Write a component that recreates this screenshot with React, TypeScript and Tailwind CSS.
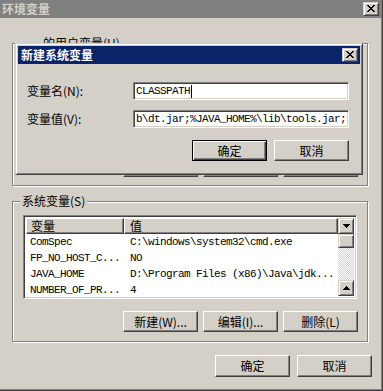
const raised =
  "border border-t-white border-l-white border-r-[#404040] border-b-[#404040] shadow-[inset_-1px_-1px_0_#808080]";
const raisedDefault =
  "border border-black shadow-[inset_1px_1px_0_#fff,inset_-1px_-1px_0_#404040,inset_-2px_-2px_0_#808080]";
const raisedSmall =
  "border border-t-[#d4d0c8] border-l-[#d4d0c8] border-r-[#404040] border-b-[#404040] shadow-[inset_1px_1px_0_#fff,inset_-1px_-1px_0_#808080]";
const sunken =
  "border border-t-[#808080] border-l-[#808080] border-r-white border-b-white shadow-[inset_1px_1px_0_#404040,inset_-1px_-1px_0_#d4d0c8]";
const etched =
  "border border-[#808080] shadow-[inset_1px_1px_0_#fff,1px_1px_0_#fff]";
const mono = "font-['Liberation_Mono',monospace] text-[11px] tracking-[-0.6px]";

const rows = [
  ["ComSpec", "C:\\windows\\system32\\cmd.exe"],
  ["FP_NO_HOST_C...", "NO"],
  ["JAVA_HOME", "D:\\Program Files (x86)\\Java\\jdk..."],
  ["NUMBER_OF_PR...", "4"],
];

function CloseBtn() {
  // the classic 8x7 bitmap cross
  const cells = [
    [0, 0, 2], [6, 0, 2],
    [1, 1, 2], [5, 1, 2],
    [2, 2, 4],
    [3, 3, 2],
    [2, 4, 4],
    [1, 5, 2], [5, 5, 2],
    [0, 6, 2], [6, 6, 2],
  ];
  return (
    <div className={`flex h-[14px] w-[16px] items-center justify-center bg-[#d4d0c8] ${raisedSmall}`}>
      <svg width="8" height="7" viewBox="0 0 8 7" shapeRendering="crispEdges" className="ml-[-1px] mt-[-1px]">
        {cells.map(([x, y, w], i) => (
          <rect key={i} x={x} y={y} width={w} height={1} fill="#000" />
        ))}
      </svg>
    </div>
  );
}

function Arrow({ down = false }: { down?: boolean }) {
  return (
    <div className={`flex h-[16px] w-[16px] items-center justify-center bg-[#d4d0c8] ${raisedSmall}`}>
      <svg width="7" height="4" viewBox="0 0 7 4" shapeRendering="crispEdges">
        {[0, 1, 2, 3].map((i) => {
          const y = down ? i : 3 - i;
          return <rect key={i} x={3 - i} y={y} width={1 + i * 2} height={1} fill="#000" />;
        })}
      </svg>
    </div>
  );
}

function Btn({ children, isDefault = false, tall = false }: { children: React.ReactNode; isDefault?: boolean; tall?: boolean }) {
  return (
    <div
      className={`flex w-[75px] items-center justify-center bg-[#d4d0c8] ${tall ? "h-[22px]" : "h-[21px]"} ${
        isDefault ? raisedDefault : raised
      }`}
    >
      {children}
    </div>
  );
}

export default function App() {
  return (
    <div className="relative h-[391px] w-[383px] overflow-hidden bg-[#d4d0c8] font-['Noto_Sans_CJK_SC',sans-serif] text-[12px] leading-[12px] text-black">
      {/* 环境变量 window (its left and top frame lie outside the shot) */}
      <div className="flex h-full flex-col border-r border-b border-r-[#404040] border-b-[#404040] pr-[1px] shadow-[inset_-1px_-1px_0_#808080]">
        <div className="flex h-[18px] items-center justify-between bg-[#808080] px-[2px]">
          <span className="font-bold text-[#d4d0c8]">环境变量</span>
          <CloseBtn />
        </div>

        <fieldset className={`ml-[12px] mt-[19px] w-[356px] ${etched}`}>
          <legend className="ml-[28px] bg-[#d4d0c8] px-[2px] leading-[12px]">的用户变量(U)</legend>
          <div className="flex h-[136px] flex-col justify-end pb-[8px]">
            <div className="flex justify-end gap-[5px] pr-[9px]">
              <Btn>新建(W)...</Btn>
              <Btn>编辑(E)...</Btn>
              <Btn>删除(D)</Btn>
            </div>
          </div>
        </fieldset>

        <fieldset className={`ml-[12px] mt-[9px] w-[356px] ${etched}`}>
          <legend className="ml-[7px] bg-[#d4d0c8] px-[2px] leading-[12px]">系统变量(S)</legend>
          <div className="pb-[9px]">
            <div className={`ml-[10px] mt-[8px] flex h-[84px] w-[334px] bg-white p-[2px] ${sunken}`}>
              <div className="flex-1">
                <div className="flex h-[16px]">
                  <div className={`flex w-[98px] items-center bg-[#d4d0c8] pl-[4px] ${raised}`}>变量</div>
                  <div className={`flex flex-1 items-center bg-[#d4d0c8] pl-[5px] ${raised}`}>值</div>
                </div>
                {rows.map(([name, value]) => (
                  <div key={name} className={`flex h-[16px] items-center ${mono}`}>
                    <div className="w-[98px] pl-[4px]">{name}</div>
                    <div className="flex-1 pl-[6px]">{value}</div>
                  </div>
                ))}
              </div>
              <div className="flex w-[16px] flex-col">
                <Arrow />
                <div className={`h-[14px] bg-[#d4d0c8] ${raisedSmall}`} />
                <div className="flex-1 bg-[repeating-conic-gradient(#d4d0c8_0_25%,#fff_0_50%)] bg-[length:2px_2px]" />
                <Arrow down />
              </div>
            </div>
            <div className="mt-[12px] flex justify-end gap-[5px] pr-[9px]">
              <Btn>新建(W)...</Btn>
              <Btn>编辑(I)...</Btn>
              <Btn>删除(L)</Btn>
            </div>
          </div>
        </fieldset>

        <div className="mt-[13px] flex justify-end gap-[7px] pr-[9px]">
          <Btn tall>确定</Btn>
          <Btn tall>取消</Btn>
        </div>
      </div>

      {/* 新建系统变量 dialog, on top of the window */}
      <div className="absolute left-[15px] top-[43px] h-[132px] w-[348px] border border-t-[#d4d0c8] border-l-[#d4d0c8] border-r-[#404040] border-b-[#404040] bg-[#d4d0c8] p-[2px] shadow-[inset_1px_1px_0_#fff,inset_-1px_-1px_0_#808080]">
        <div className="flex h-[18px] items-center justify-between bg-[#0a246a] pl-[3px] pr-[2px]">
          <span className="font-bold text-white">新建系统变量</span>
          <CloseBtn />
        </div>
        <div className="pl-[9px] pr-[11px]">
          <div className="mt-[18px] flex items-center">
            <span className="w-[106px]">变量名(N):</span>
            <div className={`flex h-[18px] w-[216px] items-center bg-white pl-[2px] ${sunken} ${mono}`}>
              CLASSPATH
              <span className="ml-[1px] h-[13px] w-px bg-black" />
            </div>
          </div>
          <div className="mt-[10px] flex items-center">
            <span className="w-[106px]">变量值(V):</span>
            <div className={`flex h-[18px] w-[216px] items-center overflow-hidden whitespace-nowrap bg-white pl-[2px] ${sunken} ${mono}`}>
              b\dt.jar;%JAVA_HOME%\lib\tools.jar;
            </div>
          </div>
          <div className="mt-[12px] flex justify-end gap-[7px]">
            <Btn isDefault>确定</Btn>
            <Btn>取消</Btn>
          </div>
        </div>
      </div>
    </div>
  );
}
